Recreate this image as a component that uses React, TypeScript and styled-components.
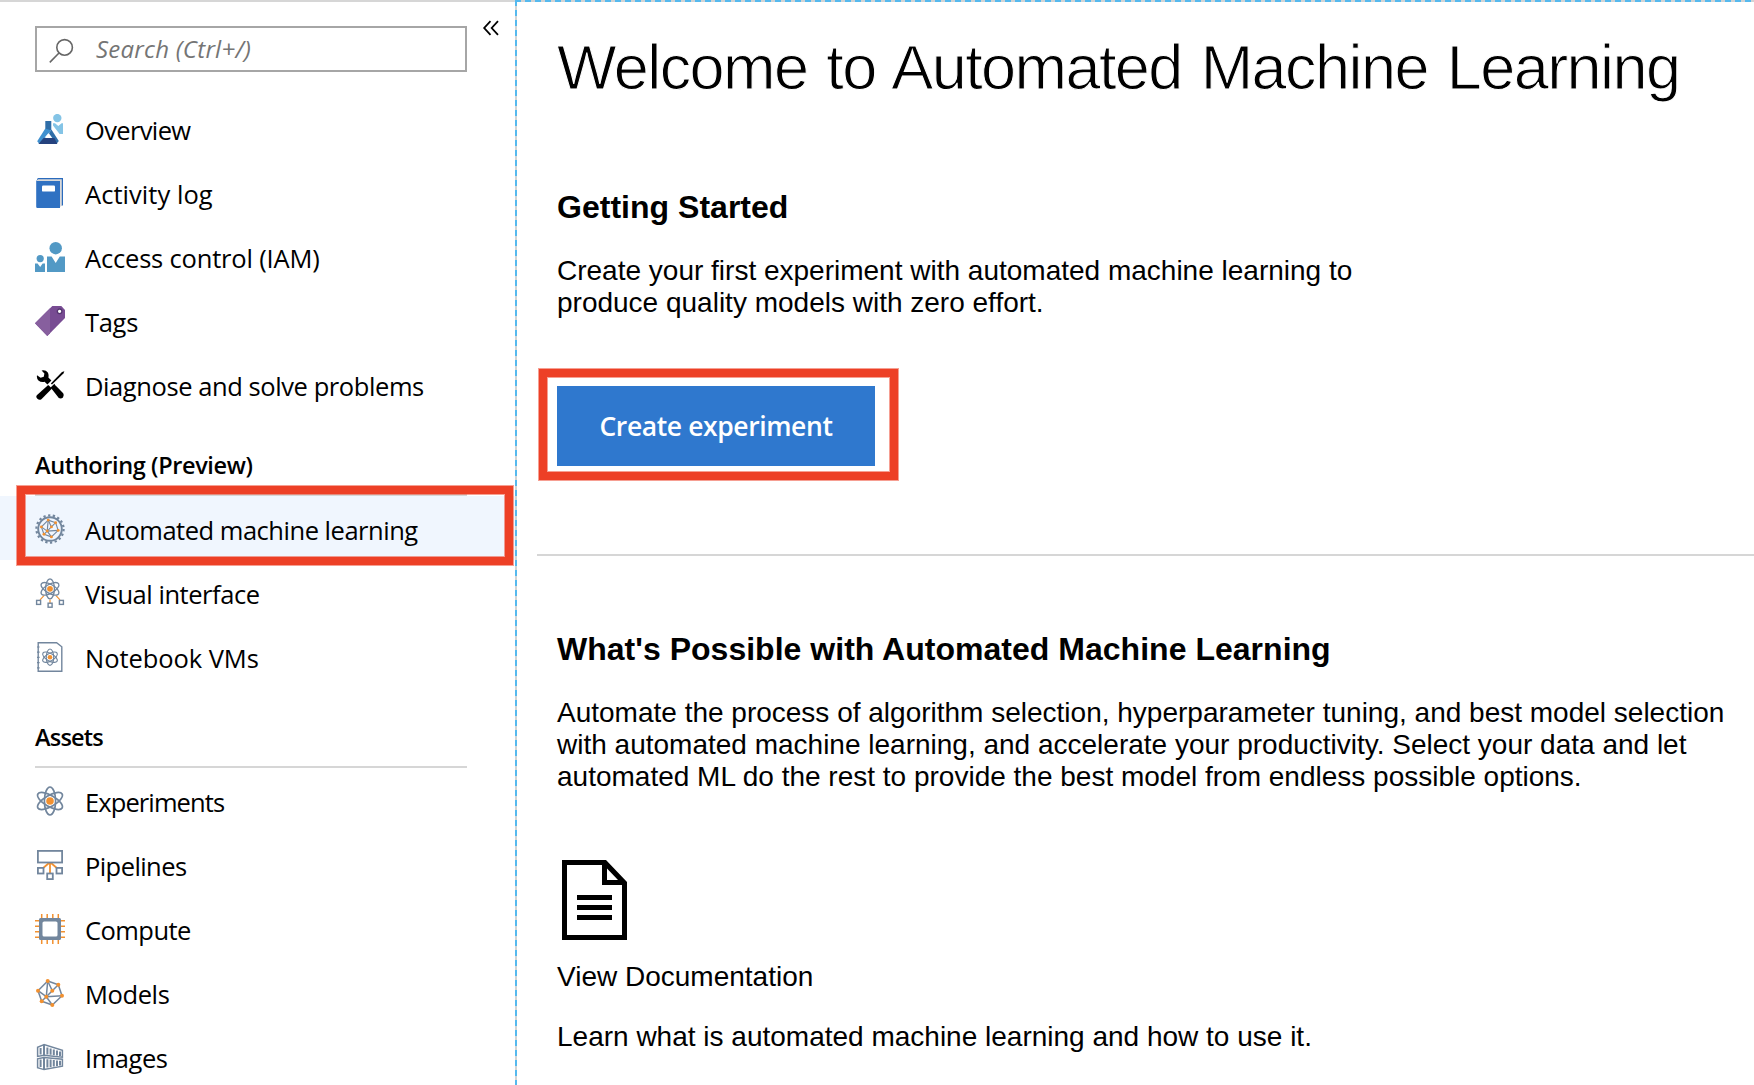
import React from "react";
import styled, { createGlobalStyle } from "styled-components";

const GlobalStyle = createGlobalStyle`
  * { box-sizing: border-box; }
  body { margin: 0; background: #fff; color: #000; }
  h1, h2, h3, p, ul { margin: 0; padding: 0; }
`;

const SLATE = "#72869d";
const ORANGE = "#f29130";
const UI_FONT = '"Open Sans", "Noto Sans", sans-serif';
const BODY_FONT = '"Liberation Sans", Arial, sans-serif';

/* ---------- layout ---------- */

const Page = styled.div`
  display: grid;
  grid-template-columns: 515px 1fr;
  height: 1085px;
  overflow: hidden;
`;

const Sidebar = styled.nav`
  height: 1085px;
  overflow: hidden;
  border-top: 2px solid #d6d6d6;
  font-family: ${UI_FONT};
`;

const SearchRow = styled.div`
  display: flex;
  align-items: flex-start;
  height: 94px;
  padding: 24px 0 0 35px;
`;

const SearchBox = styled.div`
  display: flex;
  align-items: center;
  width: 432px;
  height: 46px;
  border: 2px solid #a6a6a6;
  padding-left: 12px;
  gap: 22px;
`;

const SearchIcon = styled.svg`
  width: 25px;
  height: 26px;
  margin-top: 4px;
`;

const Placeholder = styled.span`
  font-size: 24px;
  font-style: italic;
  line-height: 32px;
  letter-spacing: 0.25px;
  color: #757575;
  white-space: nowrap;
`;

const CollapseIcon = styled.svg`
  width: 18px;
  height: 16px;
  margin: -6px 0 0 15px;
`;

const NavList = styled.ul`
  list-style: none;
`;

const NavRow = styled.li<{ $active?: boolean }>`
  position: relative;
  display: flex;
  align-items: center;
  height: 64px;
  padding: 2px 0 0 35px;
  gap: 20px;
  background: ${(p) => (p.$active ? "#f0f6fe" : "transparent")};
`;

const NavLabel = styled.span<{ $track: number }>`
  padding-top: 2px;
  font-size: 25.5px;
  line-height: 36px;
  letter-spacing: ${(p) => p.$track}px;
  white-space: nowrap;
`;

const NavIcon = styled.svg`
  flex: none;
  width: 30px;
  height: 30px;
`;

const GroupTitle = styled.h3<{ $track: number }>`
  width: 432px;
  height: 80px;
  margin-left: 35px;
  padding-top: 33px;
  border-bottom: 2px solid #d6d6d6;
  font-size: 23.5px;
  font-weight: 600;
  line-height: 32px;
  letter-spacing: ${(p) => p.$track}px;
`;

const Callout = styled.div<{ $x: number; $y: number; $w: number; $h: number }>`
  position: absolute;
  left: ${(p) => p.$x}px;
  top: ${(p) => p.$y}px;
  width: ${(p) => p.$w}px;
  height: ${(p) => p.$h}px;
  border: 8px solid #ed4026;
  box-shadow: 0 0 0 1px rgba(237, 64, 38, 0.5), inset 0 0 0 1px rgba(237, 64, 38, 0.5);
  pointer-events: none;
`;

const dashes = (dir: string) =>
  `repeating-linear-gradient(${dir}, #55b9ee 0 6px, #d3d3d3 6px 10px)`;

const Main = styled.main`
  display: flex;
  flex-direction: column;
  align-items: flex-start;
  height: 1085px;
  padding: 30px 0 0 42px;
  background-image: ${dashes("to right")}, ${dashes("to bottom")};
  background-size: 100% 2px, 2px 100%;
  background-repeat: no-repeat;
  font-family: ${BODY_FONT};
`;

const PageTitle = styled.h1`
  font-size: 63px;
  font-weight: 400;
  line-height: 74px;
  letter-spacing: -1.57px;
  word-spacing: 3px;
  white-space: nowrap;
  -webkit-text-stroke: 1px #fff;
`;

const SectionTitle = styled.h2<{ $top: number }>`
  margin-top: ${(p) => p.$top}px;
  font-size: 32px;
  font-weight: 700;
  line-height: 36px;
  letter-spacing: 0.02px;
  white-space: nowrap;
`;

const Text = styled.p<{ $top: number }>`
  margin-top: ${(p) => p.$top}px;
  font-size: 28px;
  line-height: 32px;
  white-space: nowrap;
`;

const ButtonWrap = styled.div`
  position: relative;
  margin-top: 67px;
`;

const PrimaryButton = styled.button`
  display: block;
  width: 318px;
  height: 80px;
  border: 0;
  padding: 0 0 1px;
  background: #2f78ce;
  color: #fff;
  font-family: ${UI_FONT};
  font-size: 26.5px;
  font-weight: 600;
  letter-spacing: -0.4px;
`;

const Rule = styled.hr`
  align-self: stretch;
  height: 2px;
  margin: 88px 0 0 -20px;
  border: 0;
  background: #d6d6d6;
`;

const DocIcon = styled.svg`
  width: 65px;
  height: 80px;
  margin: 67px 0 0 5px;
`;

/* ---------- icons ---------- */

const Icon = ({ children }: { children: React.ReactNode }) => (
  <NavIcon viewBox="0 0 30 30" fill="none">
    {children}
  </NavIcon>
);

const Atom = ({ cx, cy, rx, ry, dot, sw }: { cx: number; cy: number; rx: number; ry: number; dot: number; sw: number }) => (
  <>
    {[0, 60, 120].map((a) => (
      <ellipse key={a} cx={cx} cy={cy} rx={rx} ry={ry} transform={`rotate(${a} ${cx} ${cy})`} stroke={SLATE} strokeWidth={sw} />
    ))}
    <circle cx={cx} cy={cy} r={dot} fill={ORANGE} />
  </>
);

const NODES: [number, number][] = [
  [12.7, 3], [23.3, 6.7], [3, 12.7], [17.3, 12.7], [27, 17.7], [11.3, 18.7], [6.7, 23.3], [17.3, 27],
];
const EDGES = [[0, 1], [1, 4], [4, 7], [7, 6], [6, 2], [2, 0], [0, 5], [0, 3], [1, 3], [3, 5], [5, 4], [2, 5], [5, 6], [5, 7]];

const Mesh = ({ dot, sw }: { dot: number; sw: number }) => (
  <>
    {EDGES.map(([a, b]) => (
      <path key={`${a}-${b}`} d={`M${NODES[a].join(" ")}L${NODES[b].join(" ")}`} stroke={SLATE} strokeWidth={sw} />
    ))}
    {NODES.map(([x, y]) => (
      <circle key={`${x}-${y}`} cx={x} cy={y} r={dot} fill={ORANGE} />
    ))}
  </>
);

const OverviewIcon = () => (
  <Icon>
    <circle cx="22.3" cy="4.1" r="4.2" fill="#84c4e6" />
    <path d="M18 9.2H20L23.3 12 26.6 9.2H28V20H24.6L18 11.6Z" fill="#84c4e6" />
    <path d="M10.3 7H16.3V16L10.3 17.5Z" fill="#2f6ea8" />
    <path d="M10.3 14.5L16.3 16.4 9.6 24.6 4 29.6 2.2 27.2Z" fill="#3f90cf" />
    <path d="M16.4 15.5L23.8 27 21.6 29.8 14 19.6Z" fill="#2f6ea8" />
    <path d="M8.6 24H19.4L22.4 30H3.4Z" fill="#25427e" />
    <path d="M9.6 23.6L13.6 18.9 14.2 21 15.4 23.9 13 22.8Z" fill="#fff" />
  </Icon>
);

const ActivityIcon = () => (
  <Icon>
    <path d="M3.4 0H28V27.5H26V2H2Q2 0 3.4 0Z" fill="#2a6bbd" />
    <path d="M3 1.3H26.8V27.6L25 29V3H2Z" fill="#d9d9d9" />
    <path d="M1.2 2.2Q1.6 3 3 3H25V30H2.4Q1.2 30 1.2 28.8Z" fill="#2f71c2" />
    <rect x="7" y="7.4" width="13" height="6.2" rx="1.2" fill="#fff" />
  </Icon>
);

const AccessIcon = () => (
  <Icon>
    <g fill="#5299c5">
      <circle cx="20.7" cy="6.2" r="6.2" />
      <path d="M12 14.5H16.6L20.7 21 24.8 14.5H30V30H12Z" />
      <circle cx="5.2" cy="16.6" r="3.6" />
      <path d="M0 21.4H2.6L5.2 25 7.6 21.4H10V30H0Z" />
    </g>
  </Icon>
);

const TagIcon = () => (
  <Icon>
    <path d="M17.3 0H26.3L30 4V12L12.3 30 0 17.3Z" fill="#784c93" />
    <path d="M15 2.2V27.2L12.3 30 0 17.3Z" fill="#875f9e" />
    <circle cx="24.6" cy="5.3" r="2.3" fill="#fff" stroke="#553670" strokeWidth="1.3" />
  </Icon>
);

const ToolsIcon = () => (
  <Icon>
    <path d="M29.4 1.2L27 1.9 15.8 13.4 17 14.6 28.4 3.5Z" fill="#000" />
    <path d="M13.2 15L17 18.6 6.4 29.2Q4.4 30.6 2.4 28.8 0.6 27 1.8 25.2Z" fill="#000" />
    <path d="M6.6 0.4Q10.6-0.6 12.8 2.6 14 4.8 13.4 7.4L16.4 10.6 12.4 14.4 9.6 11.8Q6 12.6 3.4 10.4 1.4 8.4 2 5.2L5.6 7.8 8.8 6.8 9.4 3.4Z" fill="#000" />
    <path d="M15.6 17.4L19.4 13.8Q20 15.4 21.6 16.6L28.2 23.2Q29.6 25.4 28 27.4 26 29.2 23.8 28Z" fill="#000" />
  </Icon>
);

const AutoMlIcon = () => (
  <Icon>
    <circle cx="15" cy="15" r="13.6" stroke={SLATE} strokeWidth="2.2" strokeDasharray="2.3 2.447" />
    <circle cx="15" cy="15" r="11.8" fill="#f0f6fe" stroke={SLATE} strokeWidth="1.9" />
    <g transform="translate(4.3 4) scale(0.7)">
      <Mesh dot={2.1} sw={1.6} />
    </g>
  </Icon>
);

const VisualIcon = () => (
  <Icon>
    <g stroke={ORANGE} strokeWidth="1.2">
      <path d="M9 17.6L5 21.8M15 21.5V25M21 17.6L25 21.8" />
    </g>
    <Atom cx={15} cy={10.8} rx={4.4} ry={10} dot={2.9} sw={1.3} />
    <g stroke={SLATE} strokeWidth="1.4" fill="#fff">
      <rect x="1.6" y="22.4" width="4" height="4" />
      <rect x="13.1" y="25.2" width="4" height="4" />
      <rect x="24.4" y="22.4" width="4" height="4" />
    </g>
  </Icon>
);

const NotebookIcon = () => (
  <Icon>
    <path d="M3.2 0.7H21.6L26.8 4.8V29.3H3.2Z" stroke={SLATE} strokeWidth="1.4" />
    <path d="M2 5H4.6M2 10.2H4.6M2 15.4H4.6M2 20.6H4.6M2 25.8H4.6" stroke={SLATE} strokeWidth="1.2" />
    <Atom cx={15} cy={15.2} rx={3.7} ry={8.2} dot={2.3} sw={1.1} />
  </Icon>
);

const ExperimentsIcon = () => (
  <Icon>
    <Atom cx={15} cy={15} rx={5.6} ry={14} dot={3.8} sw={1.7} />
  </Icon>
);

const PipelinesIcon = () => (
  <Icon>
    <path d="M15 13V23.5M14 13L7 19M16 13L23 19" stroke={ORANGE} strokeWidth="1.8" />
    <g stroke={SLATE} strokeWidth="1.8" fill="#fff">
      <rect x="2.9" y="0.9" width="24.2" height="11.6" />
      <rect x="2.9" y="17.9" width="5.6" height="5.6" />
      <rect x="12.2" y="23.5" width="5.6" height="5.6" />
      <rect x="21.5" y="17.9" width="5.6" height="5.6" />
    </g>
  </Icon>
);

const ComputeIcon = () => (
  <Icon>
    <path
      d="M6.7 0V30M12.2 0V30M17.8 0V30M23.3 0V30M0 6.7H30M0 12.2H30M0 17.8H30M0 23.3H30"
      stroke={ORANGE}
      strokeWidth="1.5"
    />
    <rect x="4" y="4" width="22" height="22" rx="1.5" fill={SLATE} />
    <rect x="7.5" y="7.5" width="15" height="15" rx="1.6" fill="#fff" />
  </Icon>
);

const ModelsIcon = () => (
  <Icon>
    <Mesh dot={2} sw={1.5} />
  </Icon>
);

const ImagesIcon = () => (
  <Icon>
    <g stroke={SLATE} strokeWidth="1.5">
      <path d="M9 2.6L2.6 5.2V14.4L9 13.2 27.4 15.2V8.2Z" />
      <path d="M9 15.4L2.6 16.8V25.8L9 27.6 27.4 24.2V17.2Z" />
    </g>
    <path
      d="M9 2.6V13.2M9 15.4V27.6M12.4 5.4V12.4M15.6 6.4V12.8M18.8 7.4V13.2M22 8.6V13.6M25 9.4V14M12.4 17.2V25.6M15.6 17.6V25M18.8 18V24.4M22 18.4V24M25 18.8V23.4M5.6 6V12.4M5.6 17.6V25"
      stroke={SLATE}
      strokeWidth="2"
    />
  </Icon>
);

/* ---------- data ---------- */

type Item = { label: string; track: number; icon: React.FC; active?: boolean };

const GENERAL: Item[] = [
  { label: "Overview", track: -0.64, icon: OverviewIcon },
  { label: "Activity log", track: 0.05, icon: ActivityIcon },
  { label: "Access control (IAM)", track: -0.18, icon: AccessIcon },
  { label: "Tags", track: -0.3, icon: TagIcon },
  { label: "Diagnose and solve problems", track: -0.42, icon: ToolsIcon },
];

const AUTHORING: Item[] = [
  { label: "Automated machine learning", track: -0.48, icon: AutoMlIcon, active: true },
  { label: "Visual interface", track: -0.46, icon: VisualIcon },
  { label: "Notebook VMs", track: -0.06, icon: NotebookIcon },
];

const ASSETS: Item[] = [
  { label: "Experiments", track: -0.9, icon: ExperimentsIcon },
  { label: "Pipelines", track: -0.58, icon: PipelinesIcon },
  { label: "Compute", track: -0.55, icon: ComputeIcon },
  { label: "Models", track: -0.4, icon: ModelsIcon },
  { label: "Images", track: -0.45, icon: ImagesIcon },
];

const NavGroup = ({ items }: { items: Item[] }) => (
  <NavList>
    {items.map(({ label, track, icon: Glyph, active }) => (
      <NavRow key={label} $active={active}>
        <Glyph />
        <NavLabel $track={track}>{label}</NavLabel>
        {active && <Callout $x={17} $y={-10} $w={496} $h={79} />}
      </NavRow>
    ))}
  </NavList>
);

export default function App() {
  return (
    <Page>
      <GlobalStyle />
      <Sidebar>
        <SearchRow>
          <SearchBox>
            <SearchIcon viewBox="0 0 25 26" fill="none" stroke="#666" strokeWidth="1.6">
              <circle cx="15.6" cy="9.4" r="7.8" />
              <path d="M10 15L0.8 24.4" />
            </SearchIcon>
            <Placeholder>Search (Ctrl+/)</Placeholder>
          </SearchBox>
          <CollapseIcon viewBox="0 0 18 16" fill="none" stroke="#000" strokeWidth="1.8">
            <path d="M8.5 1.2L2.2 8L8.5 14.8M16 1.2L9.7 8L16 14.8" />
          </CollapseIcon>
        </SearchRow>
        <NavGroup items={GENERAL} />
        <GroupTitle $track={-0.37}>Authoring (Preview)</GroupTitle>
        <NavGroup items={AUTHORING} />
        <GroupTitle $track={-0.8}>Assets</GroupTitle>
        <NavGroup items={ASSETS} />
      </Sidebar>
      <Main>
        <PageTitle>Welcome to Automated Machine Learning</PageTitle>
        <SectionTitle $top={85}>Getting Started</SectionTitle>
        <Text $top={30}>
          Create your first experiment with automated machine learning to
          <br />
          produce quality models with zero effort.
        </Text>
        <ButtonWrap>
          <PrimaryButton>Create experiment</PrimaryButton>
          <Callout $x={-18} $y={-17} $w={359} $h={111} />
        </ButtonWrap>
        <Rule />
        <SectionTitle $top={75}>What's Possible with Automated Machine Learning</SectionTitle>
        <Text $top={30}>
          Automate the process of algorithm selection, hyperparameter tuning, and best model selection
          <br />
          with automated machine learning, and accelerate your productivity. Select your data and let
          <br />
          automated ML do the rest to provide the best model from endless possible options.
        </Text>
        <DocIcon viewBox="0 0 65 80">
          <path
            fillRule="evenodd"
            d="M0 0H44L65 22V80H0ZM5 5V75H60V25H40V5ZM45 8.5V20H56Z"
          />
          <path d="M15 35H50V40H15ZM15 45H50V50H15ZM15 55H50V60H15Z" />
        </DocIcon>
        <Text $top={21}>View Documentation</Text>
        <Text $top={28}>Learn what is automated machine learning and how to use it.</Text>
      </Main>
    </Page>
  );
}
